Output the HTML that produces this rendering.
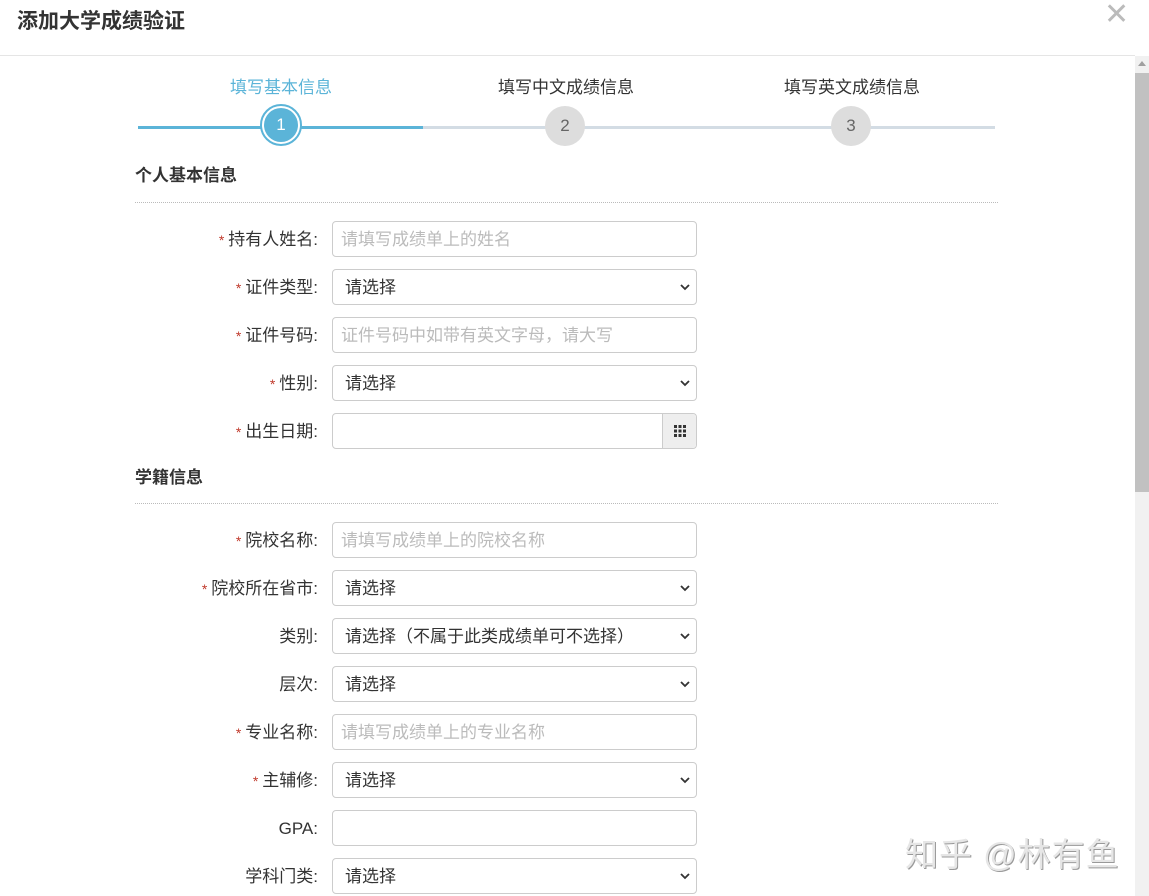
<!DOCTYPE html>
<html><head><meta charset="utf-8">
<style>
*{box-sizing:border-box;margin:0;padding:0}
body{width:1149px;height:896px;overflow:hidden;background:#fff;font-family:"Liberation Sans","Noto Sans CJK SC",sans-serif;color:#333;position:relative}
.title{position:absolute;left:17px;top:5px;font-size:21px;font-weight:bold;color:#333}
.close{position:absolute;left:1104px;top:0px;font-size:30px;color:#bbb;line-height:30px}
.hline{position:absolute;left:0;top:55px;width:1135px;height:1px;background:#e5e5e5}
.sb{position:absolute;left:1135px;top:56px;width:14px;height:840px;background:#f1f1f1}
.thumb{position:absolute;left:1135px;top:73px;width:14px;height:419px;background:#c1c1c1}
.arr{position:absolute;left:1138px;top:61px;width:0;height:0;border-left:4px solid transparent;border-right:4px solid transparent;border-bottom:5px solid #a0a0a0}
.line{position:absolute;top:126px;height:3px}
.circ{position:absolute;width:40px;height:40px;border-radius:50%;top:106px;text-align:center;line-height:40px;font-size:17px}
.slabel{position:absolute;top:73px;font-size:17px;width:200px;text-align:center}
.sec{position:absolute;left:135px;font-size:17px;font-weight:bold;color:#333}
.dot{position:absolute;left:135px;width:863px;border-top:1px dotted #bbb}
.lbl{position:absolute;right:831px;font-size:17px;color:#333;white-space:nowrap;line-height:37px}
.lbl b{color:#c0392b;font-weight:normal;font-size:14px;margin-right:4px}
.in{position:absolute;left:332px;width:365px;height:36px;border:1px solid #ccc;border-radius:4px;font-size:17px;line-height:36px;padding-left:12px;color:#333}
.in.ph{color:#bbb;padding-left:8px}
.in svg{position:absolute;right:6px;top:14px}
.wm{position:absolute;left:905px;top:828px;font-size:33px;color:#e6e6e6;text-shadow:1px 1px 0 #999;letter-spacing:1px}
</style></head><body>
<div class="title">添加大学成绩验证</div>
<div class="close">✕</div>
<div class="hline"></div>
<div class="sb"></div><div class="thumb"></div><div class="arr"></div>

<div class="line" style="left:138px;width:285px;background:#5bb4d8"></div>
<div class="line" style="left:423px;width:572px;background:#d3dce4"></div>
<div class="slabel" style="left:181px;color:#5bb4d8">填写基本信息</div>
<div class="slabel" style="left:466px">填写中文成绩信息</div>
<div class="slabel" style="left:752px">填写英文成绩信息</div>
<div class="circ" style="left:260px;top:104px;width:42px;height:42px;border:2px solid #5bb4d8;background:#fff"></div>
<div class="circ" style="left:264px;top:108px;width:34px;height:34px;line-height:34px;background:#5bb4d8;color:#fff">1</div>
<div class="circ" style="left:545px;background:#ddd;color:#666">2</div>
<div class="circ" style="left:831px;background:#ddd;color:#666">3</div>

<div class="sec" style="top:161px">个人基本信息</div>
<div class="dot" style="top:202px"></div>
<div class="sec" style="top:463px">学籍信息</div>
<div class="dot" style="top:503px"></div>

<div class="lbl" style="top:221px"><b>*</b>持有人姓名:</div><div class="in ph" style="top:221px">请填写成绩单上的姓名</div>
<div class="lbl" style="top:269px"><b>*</b>证件类型:</div><div class="in" style="top:269px">请选择<svg width="10" height="7"><path d="M1 1l4 4 4-4" stroke="#333" stroke-width="1.8" fill="none"/></svg></div>
<div class="lbl" style="top:317px"><b>*</b>证件号码:</div><div class="in ph" style="top:317px">证件号码中如带有英文字母，请大写</div>
<div class="lbl" style="top:365px"><b>*</b>性别:</div><div class="in" style="top:365px">请选择<svg width="10" height="7"><path d="M1 1l4 4 4-4" stroke="#333" stroke-width="1.8" fill="none"/></svg></div>
<div class="lbl" style="top:413px"><b>*</b>出生日期:</div><div class="in" style="top:413px"><div style="position:absolute;right:0;top:0;width:34px;height:34px;background:#eee;border-left:1px solid #ccc;border-radius:0 4px 4px 0"><svg width="12" height="12" style="position:absolute;left:11px;top:11px;right:auto"><g fill="#333"><rect x="0" y="0" width="3" height="3"/><rect x="4.5" y="0" width="3" height="3"/><rect x="9" y="0" width="3" height="3"/><rect x="0" y="4.5" width="3" height="3"/><rect x="4.5" y="4.5" width="3" height="3"/><rect x="9" y="4.5" width="3" height="3"/><rect x="0" y="9" width="3" height="3"/><rect x="4.5" y="9" width="3" height="3"/><rect x="9" y="9" width="3" height="3"/></g></svg></div></div>

<div class="lbl" style="top:522px"><b>*</b>院校名称:</div><div class="in ph" style="top:522px">请填写成绩单上的院校名称</div>
<div class="lbl" style="top:570px"><b>*</b>院校所在省市:</div><div class="in" style="top:570px">请选择<svg width="10" height="7"><path d="M1 1l4 4 4-4" stroke="#333" stroke-width="1.8" fill="none"/></svg></div>
<div class="lbl" style="top:618px">类别:</div><div class="in" style="top:618px">请选择（不属于此类成绩单可不选择）<svg width="10" height="7"><path d="M1 1l4 4 4-4" stroke="#333" stroke-width="1.8" fill="none"/></svg></div>
<div class="lbl" style="top:666px">层次:</div><div class="in" style="top:666px">请选择<svg width="10" height="7"><path d="M1 1l4 4 4-4" stroke="#333" stroke-width="1.8" fill="none"/></svg></div>
<div class="lbl" style="top:714px"><b>*</b>专业名称:</div><div class="in ph" style="top:714px">请填写成绩单上的专业名称</div>
<div class="lbl" style="top:762px"><b>*</b>主辅修:</div><div class="in" style="top:762px">请选择<svg width="10" height="7"><path d="M1 1l4 4 4-4" stroke="#333" stroke-width="1.8" fill="none"/></svg></div>
<div class="lbl" style="top:810px">GPA:</div><div class="in" style="top:810px"></div>
<div class="lbl" style="top:858px">学科门类:</div><div class="in" style="top:858px">请选择<svg width="10" height="7"><path d="M1 1l4 4 4-4" stroke="#333" stroke-width="1.8" fill="none"/></svg></div>

<div class="wm">知乎 @林有鱼</div>
</body></html>
